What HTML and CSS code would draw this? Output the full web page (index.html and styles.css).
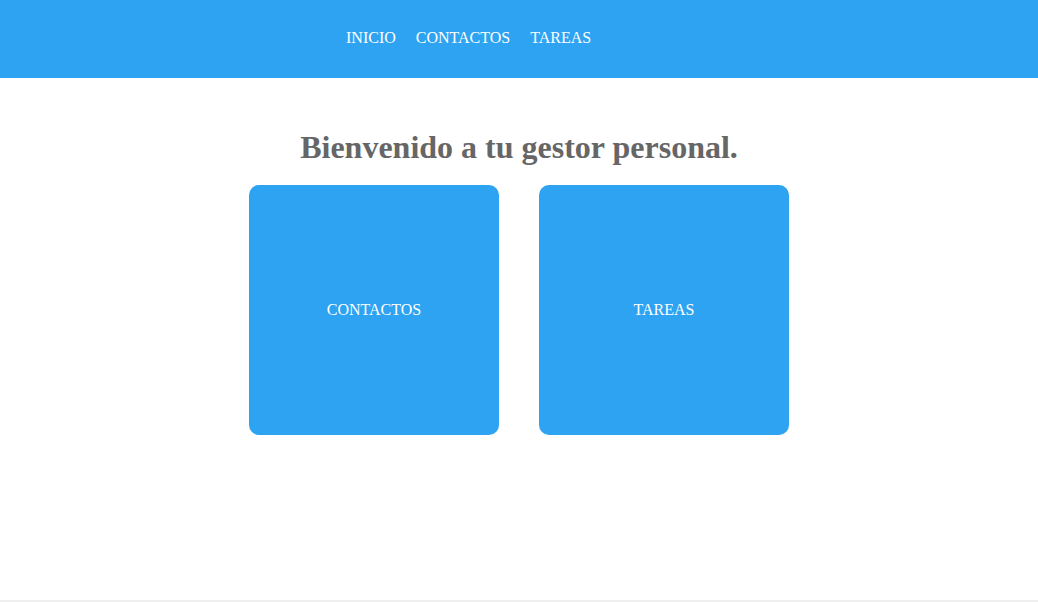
FILE: index.html
```html
<!DOCTYPE html>
<html lang="es">
<head>
<meta charset="utf-8">
<title>Gestor personal</title>
<link rel="stylesheet" href="styles.css">
</head>
<body>
<div class="page">
  <header class="header">
    <nav class="nav">
      <a href="#" class="nav-link">INICIO</a>
      <a href="#" class="nav-link">CONTACTOS</a>
      <a href="#" class="nav-link">TAREAS</a>
    </nav>
  </header>
  <main class="main">
    <h1 class="title">Bienvenido a tu gestor personal.</h1>
    <div class="cards">
      <a href="#" class="card">CONTACTOS</a>
      <a href="#" class="card">TAREAS</a>
    </div>
  </main>
  <footer class="footer"></footer>
</div>
</body>
</html>
```
FILE: styles.css
```css
html, body {
  margin: 0;
  padding: 0;
  background: #ffffff;
  font-family: "Liberation Serif", "Times New Roman", serif;
}
.page {
  display: flex;
  flex-direction: column;
  height: 100vh;
}
.header {
  background: #2ea3f2;
  height: 78px;
  display: flex;
  align-items: center;
  padding-left: 346px;
  box-sizing: border-box;
  flex-shrink: 0;
}
.nav {
  display: flex;
  gap: 20px;
  margin-top: -2px;
}
.nav-link {
  color: #ffffff;
  text-decoration: none;
  font-size: 16px;
}
.main {
  flex: 1;
  display: flex;
  flex-direction: column;
  align-items: center;
}
.title {
  margin: 49px 0 0 0;
  font-size: 32px;
  font-weight: bold;
  color: #666666;
  line-height: 40px;
}
.cards {
  display: flex;
  gap: 40px;
  margin-top: 18px;
}
.card {
  width: 250px;
  height: 250px;
  background: #2ea3f2;
  border-radius: 10px;
  color: #ffffff;
  text-decoration: none;
  font-size: 16px;
  display: flex;
  align-items: center;
  justify-content: center;
}
.footer {
  height: 0;
  border-top: 2px solid #efefef;
  flex-shrink: 0;
}
```
